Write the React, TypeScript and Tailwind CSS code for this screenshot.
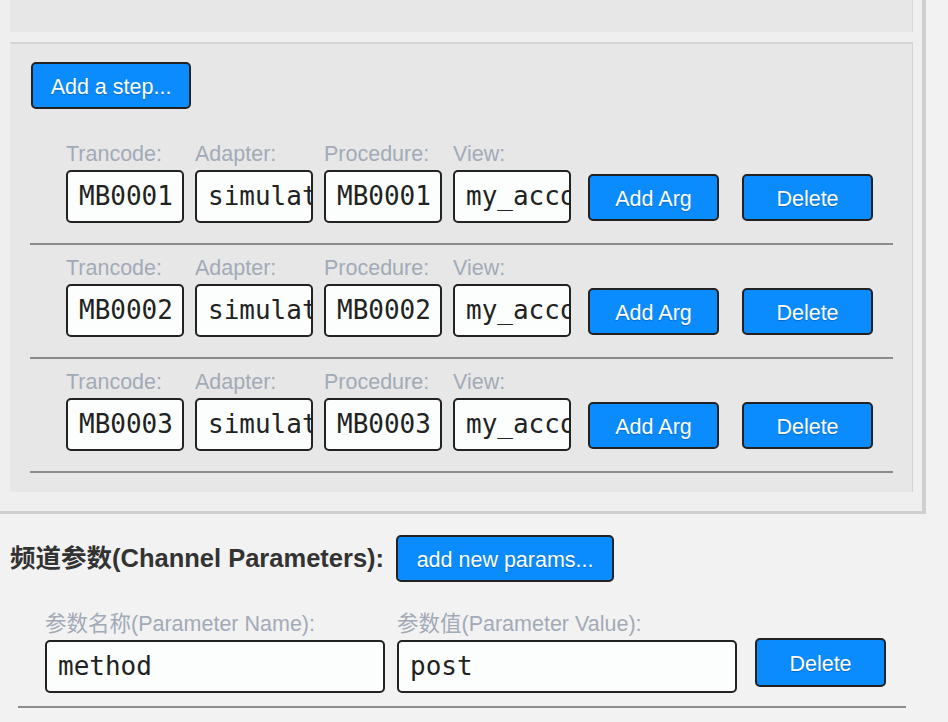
import React from 'react';

const steps = [
  { trancode: 'MB0001', adapter: 'simulator', procedure: 'MB0001', view: 'my_account' },
  { trancode: 'MB0002', adapter: 'simulator', procedure: 'MB0002', view: 'my_account' },
  { trancode: 'MB0003', adapter: 'simulator', procedure: 'MB0003', view: 'my_account' },
];

const mono = "font-['DejaVu_Sans_Mono',Menlo,monospace]";

function Field({ label, value, width }: { label: string; value: string; width: string }) {
  return (
    <div className="flex flex-col">
      <div className="h-[22px] text-[21.5px] leading-[22px] text-[#a3aab7] whitespace-nowrap">{label}</div>
      <div
        className={`mt-[5px] h-[53px] ${width} overflow-hidden whitespace-nowrap rounded-[5px] border-2 border-[#222] bg-[#fbfefd] pl-[11px] text-[26px] leading-[49px] text-[#222] ${mono}`}
      >
        {value}
      </div>
    </div>
  );
}

function BlueButton({ children, className = '' }: { children: React.ReactNode; className?: string }) {
  return (
    <button
      className={`h-[47px] rounded-[5px] border-2 border-[#222] bg-[#0a8cff] pt-[3px] text-[21.5px] leading-[24px] text-white [text-shadow:0_1px_1px_rgba(0,0,0,0.25)] ${className}`}
    >
      {children}
    </button>
  );
}

export default function App() {
  return (
    <div className="min-h-screen bg-[#f2f2f2] font-['Liberation_Sans','Noto_Sans_CJK_SC',sans-serif]">
      <div className="w-[926px] border-b-[3px] border-r-[4px] border-[#cfcfcf] bg-[#efefef] pb-[19px] pl-[10px] pr-[9px]">
        {/* previous panel, cut off at the top */}
        <div className="h-[32px] border-r border-[#d9d9d9] bg-[#e7e7e7]" />

        <div className="mt-[10px] border-r border-t-2 border-[#d4d4d4] bg-[#e7e7e7] pb-[19px] pt-[18px]">
          <BlueButton className="ml-[21px] w-[160px]">Add a step...</BlueButton>

          <div className="ml-[20px] mr-[19px] mt-[22px]">
            {steps.map((s) => (
              <div key={s.trancode} className="border-b-2 border-[#8c8c8c] pb-[20px] pl-[36px] pt-[12px]">
                <div className="flex items-end">
                  <div className="flex gap-[11px]">
                    <Field label="Trancode:" value={s.trancode} width="w-[118px]" />
                    <Field label="Adapter:" value={s.adapter} width="w-[118px]" />
                    <Field label="Procedure:" value={s.procedure} width="w-[118px]" />
                    <Field label="View:" value={s.view} width="w-[118px]" />
                  </div>
                  <BlueButton className="mb-[2px] ml-[17px] w-[131px]">Add Arg</BlueButton>
                  <BlueButton className="mb-[2px] ml-[23px] w-[131px]">Delete</BlueButton>
                </div>
              </div>
            ))}
          </div>
        </div>
      </div>

      <div className="mt-[21px] flex items-center pl-[10px]">
        <span className="text-[25.5px] font-bold text-[#333]">频道参数(Channel Parameters):</span>
        <BlueButton className="ml-[12px] w-[218px]">add new params...</BlueButton>
      </div>

      <div className="ml-[18px] mt-[31px] w-[888px] border-b-2 border-[#8c8c8c] pb-[13px] pl-[27px]">
        <div className="flex items-start">
          <div className="flex gap-[12px]">
            <Field label="参数名称(Parameter Name):" value="method" width="w-[340px]" />
            <Field label="参数值(Parameter Value):" value="post" width="w-[340px]" />
          </div>
          <BlueButton className="ml-[18px] mt-[25px] h-[49px] w-[131px]">Delete</BlueButton>
        </div>
      </div>
    </div>
  );
}
